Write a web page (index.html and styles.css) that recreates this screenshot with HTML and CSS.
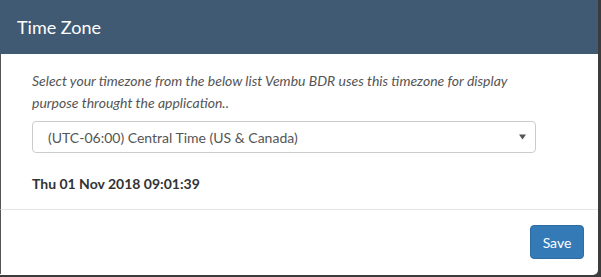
FILE: index.html
```html
<!DOCTYPE html>
<html lang="en">
<head>
    <meta charset="UTF-8">
    <title>Time Zone</title>
    <link rel="stylesheet" href="styles.css">
</head>
<body>
    <div class="modal">
        <div class="modal-header">
            <h4 class="modal-title">Time Zone</h4>
        </div>
        <div class="modal-body">
            <p class="hint">Select your timezone from the below list Vembu BDR uses this timezone for display purpose throught the application..</p>
            <div class="tz-select">
                <span>(UTC-06:00) Central Time (US &amp; Canada)</span>
                <svg class="caret" width="7" height="6" viewBox="0 0 7 6"><path d="M0 0.5h7L3.5 5.5z" fill="#555"/></svg>
            </div>
            <div class="current-time">Thu 01 Nov 2018 09:01:39</div>
        </div>
        <div class="modal-footer">
            <button class="btn-save">Save</button>
        </div>
    </div>
</body>
</html>
```
FILE: styles.css
```css
body {
    margin: 0;
    background-color: #3c3c3c;
    font-family: Lato, "Open Sans", sans-serif;
    font-size: 14px;
    color: #333;
}

.modal {
    width: 598px;
    height: 275px;
    background-color: #fff;
    border-bottom-right-radius: 5px;
    overflow: hidden;
}

.modal-header {
    background-color: #405a74;
    padding: 15px 17px;
    height: 24px;
}

.modal-title {
    margin: 0;
    font-size: 18px;
    font-weight: normal;
    line-height: 24px;
    color: #fff;
}

.modal-body {
    border-left: 1px solid #555;
    padding: 16px 62px 14px 31px;
    border-bottom: 1px solid #e5e5e5;
}

.hint {
    margin: 0 0 7px;
    font-style: italic;
    line-height: 22px;
    color: #555;
}

.tz-select {
    display: flex;
    justify-content: space-between;
    align-items: center;
    height: 30px;
    border: 1px solid #ccc;
    border-radius: 4px;
    padding: 0 9px 0 15px;
    color: #555;
}

.caret {
    display: block;
}

.current-time {
    margin-top: 20px;
    font-weight: bold;
    line-height: 22px;
    color: #333;
}

.modal-footer {
    border-left: 1px solid #555;
    display: flex;
    justify-content: flex-end;
    padding: 15px 14px 15px 0;
}

.btn-save {
    height: 34px;
    width: 54px;
    padding: 0;
    font-family: Lato, "Open Sans", sans-serif;
    font-size: 14px;
    color: #fff;
    background-color: #337ab7;
    border: 1px solid #2e6da4;
    border-radius: 4px;
}
```
